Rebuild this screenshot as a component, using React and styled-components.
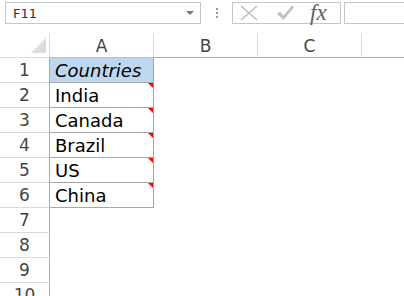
import React from 'react';
import styled, { createGlobalStyle } from 'styled-components';

const GlobalStyle = createGlobalStyle`
  body {
    margin: 0;
    background: #fff;
    font-family: "DejaVu Sans", sans-serif;
  }
`;

const Page = styled.div`
  width: 404px;
  height: 296px;
  overflow: hidden;
  background: #fff;
`;

const Toolbar = styled.div`
  display: flex;
  align-items: stretch;
  height: 22px;
  padding-top: 2px;
`;

const NameBox = styled.div`
  box-sizing: border-box;
  width: 196px;
  margin-left: 5px;
  border: 1px solid #c6c6c6;
  display: flex;
  align-items: center;
  justify-content: space-between;
  padding: 0 6px 0 7px;
  font-size: 13px;
  color: #333;
`;

const Caret = styled.span`
  width: 0;
  height: 0;
  border-left: 4px solid transparent;
  border-right: 4px solid transparent;
  border-top: 4px solid #777;
`;

const Grip = styled.div`
  width: 31px;
  display: flex;
  flex-direction: column;
  align-items: center;
  justify-content: center;
  gap: 2px;
  span {
    width: 2px;
    height: 2px;
    background: #999;
  }
`;

const FxBox = styled.div`
  box-sizing: border-box;
  width: 109px;
  border: 1px solid #c6c6c6;
  display: flex;
  align-items: center;
  padding-left: 7px;
  gap: 18px;
`;

const FxLabel = styled.span`
  font-family: "Liberation Serif", serif;
  font-style: italic;
  font-size: 23px;
  color: #5e5e5e;
  line-height: 1;
  margin-left: -3px;
  margin-top: -2px;
`;

const FormulaInput = styled.div`
  flex: 1;
  margin-left: 3px;
  border: 1px solid #c6c6c6;
  border-right: none;
`;

const Sheet = styled.div`
  display: grid;
  grid-template-columns: 50px 104px 104px 104px 1fr;
  grid-auto-rows: 25px;
  margin-top: 9px;
`;

const Corner = styled.div`
  box-sizing: border-box;
  border-right: 1px solid #dadada;
  border-bottom: 1px solid #dadada;
  display: flex;
  align-items: flex-end;
  justify-content: flex-end;
  padding: 0 3px 4px 0;
`;

const ColHeader = styled.div`
  box-sizing: border-box;
  border-right: ${p => (p.$last ? 'none' : '1px solid #dadada')};
  border-bottom: 1px solid ${p => (p.$active ? '#9cc3e5' : '#ababab')};
  display: flex;
  align-items: center;
  justify-content: center;
  font-size: 17px;
  color: #444;
  padding-top: 2px;
`;

const RowHeader = styled.div`
  box-sizing: border-box;
  border-right: 1px solid #ababab;
  border-bottom: 1px solid #dadada;
  display: flex;
  align-items: center;
  justify-content: center;
  font-size: 17px;
  color: #444;
`;

const Cell = styled.div`
  position: relative;
  box-sizing: border-box;
  border-right: ${p => (p.$boxed ? '1px solid #a6a6a6' : 'none')};
  border-bottom: ${p => (p.$boxed ? '1px solid #a6a6a6' : 'none')};
  background: ${p => (p.$head ? '#bcd7ef' : 'transparent')};
  font-size: 18px;
  font-style: ${p => (p.$head ? 'italic' : 'normal')};
  color: #000;
  display: flex;
  align-items: center;
  padding: 1px 0 0 5px;
  white-space: nowrap;
`;

const CommentMark = styled.span`
  position: absolute;
  top: 0;
  right: 0;
  width: 0;
  height: 0;
  border-top: 5px solid #f00;
  border-left: 5px solid transparent;
`;

const rows = ['Countries', 'India', 'Canada', 'Brazil', 'US', 'China', '', '', '', ''];

export default function App() {
  return (
    <Page>
      <GlobalStyle />
      <Toolbar>
        <NameBox>
          F11
          <Caret />
        </NameBox>
        <Grip>
          <span />
          <span />
          <span />
        </Grip>
        <FxBox>
          <svg width="18" height="16" viewBox="0 0 18 16">
            <path d="M1 1 L17 15 M17 1 L1 15" stroke="#bdbdbd" strokeWidth="1.5" fill="none" />
          </svg>
          <svg width="19" height="16" viewBox="0 0 19 16">
            <path d="M1 9 L4 6.5 L7.5 10.5 L16 0.5 L18 2.5 L7.5 15 Z" fill="#c2c2c2" />
          </svg>
          <FxLabel>fx</FxLabel>
        </FxBox>
        <FormulaInput />
      </Toolbar>
      <Sheet>
        <Corner>
          <svg width="15" height="15" viewBox="0 0 15 15">
            <polygon points="15,0 15,15 0,15" fill="#dcdcdc" />
          </svg>
        </Corner>
        <ColHeader $active>A</ColHeader>
        <ColHeader>B</ColHeader>
        <ColHeader>C</ColHeader>
        <ColHeader $last />
        {rows.map((text, i) => (
          <React.Fragment key={i}>
            <RowHeader>{i + 1}</RowHeader>
            <Cell $boxed={i < 6} $head={i === 0}>
              {text}
              {i > 0 && i < 6 && <CommentMark />}
            </Cell>
            <Cell />
            <Cell />
            <Cell />
          </React.Fragment>
        ))}
      </Sheet>
    </Page>
  );
}
